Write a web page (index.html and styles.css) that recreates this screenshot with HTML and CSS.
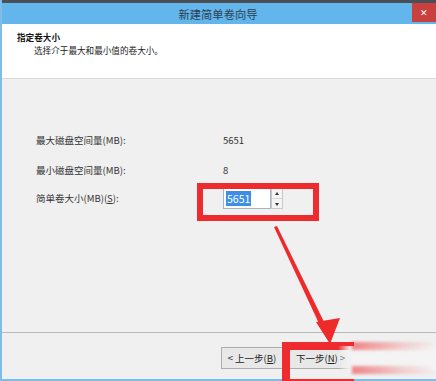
FILE: index.html
```html
<!DOCTYPE html>
<html lang="zh">
<head>
<meta charset="utf-8">
<link rel="stylesheet" href="styles.css">
</head>
<body>
<div class="window">
  <div class="topstrip"></div>
  <div class="titlebar">
    <span class="title">新建简单卷向导</span>
    <span class="close">✕</span>
  </div>
  <div class="header">
    <div class="h-title">指定卷大小</div>
    <div class="h-sub">选择介于最大和最小值的卷大小。</div>
  </div>
  <div class="body">
    <div class="row"><span class="label">最大磁盘空间量(MB):</span><span class="value">5651</span></div>
    <div class="row"><span class="label">最小磁盘空间量(MB):</span><span class="value">8</span></div>
    <div class="row row-input"><span class="label">简单卷大小(MB)(<u>S</u>):</span>
      <span class="spin">
        <span class="input"><span class="sel">5651</span></span>
        <span class="arrows"><span class="up"></span><span class="down"></span></span>
      </span>
    </div>
  </div>
  <div class="footer">
    <button class="btn">&lt; 上一步(<u>B</u>)</button>
    <button class="btn next">下一步(<u>N</u>) &gt;</button>
  </div>
  <div class="bottomline"></div>

  <div class="redbox box1"></div>
  <div class="redbox box2"></div>
  <div class="haze"></div>
  <div class="smear smear-top"></div>
  <div class="smear smear-bot"></div>
  <svg class="arrow" width="436" height="381" viewBox="0 0 436 381">
    <polygon points="274,227 277,226 327,328 322,330" fill="#ee2a2a"/>
    <polygon points="316,322 340,318 330,344" fill="#ee2a2a"/>
  </svg>
</div>
</body>
</html>
```
FILE: styles.css
```css
* { box-sizing: border-box; }
html, body { margin: 0; padding: 0; }
body {
  width: 436px;
  height: 381px;
  overflow: hidden;
  font-family: "Noto Sans CJK SC", "Noto Sans", sans-serif;
  font-size: 9.5px;
  color: #222;
  background: #f0f0f0;
}
.window {
  position: relative;
  width: 436px;
  height: 381px;
  display: flex;
  flex-direction: column;
  border-left: 2px solid #7fbde6;
  background: #f0f0f0;
}
.topstrip {
  height: 3px;
  background: #4a4f55;
}
.titlebar {
  height: 21px;
  background: #62b6ec;
  display: flex;
  align-items: center;
  justify-content: center;
  position: relative;
}
.title {
  font-size: 11.3px;
  color: #2c3e50;
  margin-left: -2px;
}
.close {
  position: absolute;
  right: 0;
  top: 0;
  width: 24px;
  height: 19px;
  background: #c9403f;
  color: #fff;
  font-size: 9px;
  display: flex;
  align-items: center;
  justify-content: center;
}
.header {
  height: 55px;
  background: #fff;
  border-bottom: 1px solid #d9d9d9;
  padding: 7px 0 0 15px;
}
.h-title {
  font-weight: bold;
  font-size: 8.6px;
  line-height: 13px;
  color: #111;
}
.h-sub {
  padding-left: 17px;
  font-size: 8.6px;
  line-height: 13px;
  color: #222;
}
.body {
  flex: 1;
  padding: 53px 0 0 34px;
  display: flex;
  flex-direction: column;
  gap: 14px;
}
.row {
  display: flex;
  align-items: center;
  height: 16px;
}
.label {
  width: 187px;
  color: #333;
}
.value { color: #333; }
.row-input { margin-top: -2px; }
.spin {
  display: flex;
  height: 21px;
}
.input {
  width: 48px;
  height: 21px;
  background: #fff;
  border: 1px solid #a9b4c2;
  padding: 2px 0 0 2px;
}
.sel {
  background: #3d8ee6;
  color: #fff;
  font-size: 10.5px;
  padding: 0 1px;
  line-height: 15px;
  display: inline-block;
}
.arrows {
  width: 12px;
  height: 21px;
  display: flex;
  flex-direction: column;
  border: 1px solid #c8c8c8;
  background: #f4f4f4;
}
.up, .down {
  flex: 1;
  position: relative;
}
.up { border-bottom: 1px solid #d8d8d8; }
.up::after, .down::after {
  content: "";
  position: absolute;
  left: 3px;
  top: 3px;
  border-left: 2.5px solid transparent;
  border-right: 2.5px solid transparent;
}
.up::after { border-bottom: 3px solid #333; }
.down::after { border-top: 3px solid #333; top: 4px; }
.footer {
  height: 47px;
  border-top: 1px solid #b9b9b9;
  padding: 14px 0 0 219px;
  display: flex;
  gap: 6px;
  align-items: flex-start;
}
.btn {
  font-family: "Noto Sans CJK SC", "Noto Sans", sans-serif;
  font-size: 9.5px;
  color: #222;
  height: 22px;
  width: 62px;
  border: 1px solid #adadad;
  background: #e8e8e8;
  padding: 0;
  white-space: nowrap;
}
.next { width: 62px; text-align: left; padding-left: 6px; }
.bottomline {
  height: 2px;
  background: #7fbde6;
}
.redbox {
  position: absolute;
  border: 6px solid #ee2b2e;
}
.box1 {
  left: 195px;
  top: 183px;
  width: 122px;
  height: 38px;
}
.box2 {
  left: 280px;
  top: 342px;
  width: 72px;
  height: 45px;
  border-width: 8px 0 8px 8px;
}
.haze {
  position: absolute;
  left: 336px;
  top: 346px;
  width: 100px;
  height: 24px;
  background: linear-gradient(to right, rgba(244,244,244,0), rgba(244,244,244,0.95) 12%, rgba(244,244,244,0.95));
}
.smear {
  position: absolute;
  left: 350px;
  width: 84px;
  height: 8px;
  background: linear-gradient(to right, rgba(238,43,46,0.55), rgba(238,43,46,0.18) 60%, rgba(238,43,46,0));
  filter: blur(1.5px);
}
.smear-top { top: 342px; }
.smear-bot { top: 366px; }
.arrow {
  position: absolute;
  left: -2px;
  top: 0;
  pointer-events: none;
}
```
